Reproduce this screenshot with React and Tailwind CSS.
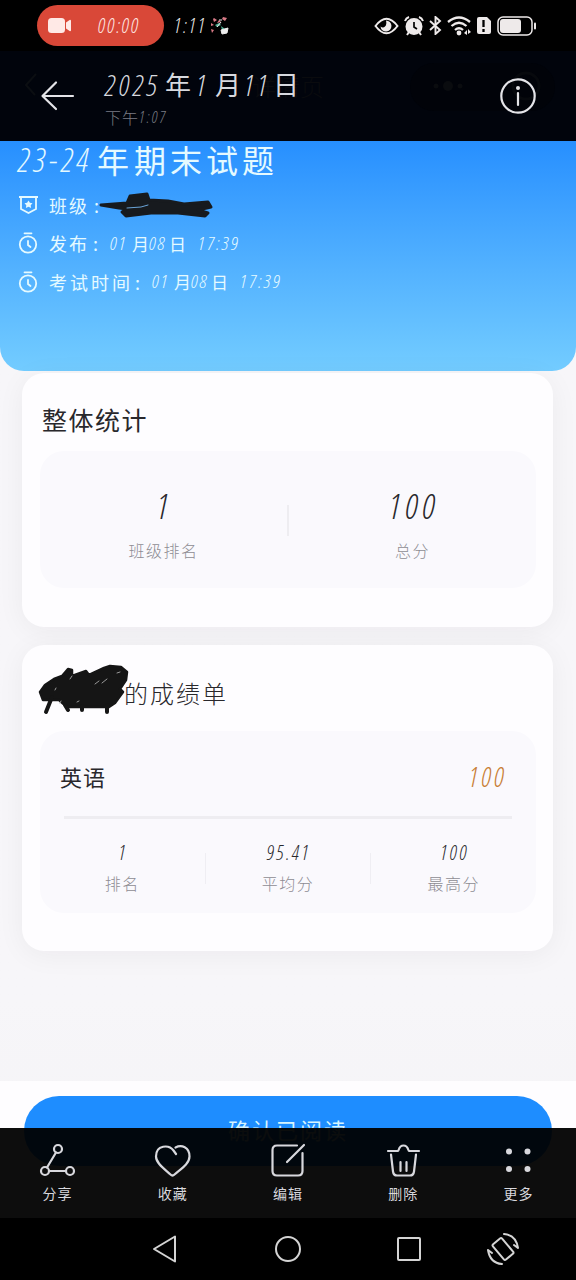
import React from "react";

const digitFont = "font-['Open_Sans','Noto_Sans_CJK_SC',sans-serif] font-light italic [font-stretch:75%]";

function Num({ className = "", tracking = "tracking-[0.1em]", children }) {
  return <span className={`${digitFont} ${tracking} ${className}`}>{children}</span>;
}

function StatusBar() {
  return (
    <div className="flex h-[51px] shrink-0 items-center bg-black pl-[37px] text-[#eeeaea]">
      <div className="flex h-[41px] w-[127px] items-center rounded-full bg-[#d94838] pl-[11px]">
        <svg width="24" height="17" viewBox="0 0 24 17" fill="#ffe9e6">
          <rect x="0" y="1" width="17" height="15" rx="3.5" />
          <path d="M18 5.5 22 2.8q1 0 1 1v9.4q0 1-1 1L18 11.5z" />
        </svg>
        <Num className="ml-[26px] text-[20px] leading-none text-[#ffe9e6]">00:00</Num>
      </div>
      <Num className="ml-[10px] w-[36px] whitespace-nowrap text-[20px] leading-none">1:11</Num>
      <svg width="20" height="19" viewBox="0 0 20 19" className="shrink-0">
        <path d="m4 2 3 2-3 2-1-3zM13 1l4 1-2 3-3-2zM1 7l3 2-3 1zM1 13l3 1-2 3zM7 7l2-3 2 2" fill="#d87985" />
        <path d="m5 9 4-2 2 2-4 2zM11 10l4 3-3 1z" fill="#4bad91" />
        <path d="m7 11 4-5M9 4h3M11 14l7-2-1 5-5 1z" stroke="#eee" fill="#eee" strokeWidth="1" />
      </svg>
      <div className="ml-auto mr-[39px] flex items-center">
        <svg width="25" height="20" viewBox="0 0 25 20" fill="none" stroke="currentColor" strokeWidth="2">
          <path d="M1.500 10Q12.500-4.500 23.500 10 12.500 24.500 1.500 10Z" />
          <path d="M12 4.500a5.500 5.500 0 1 1-5.500 6q2.500 2 4.500 0t1-6Z" fill="currentColor" stroke="none" />
        </svg>
        <svg className="ml-[5px]" width="20" height="20" viewBox="0 0 20 20" fill="none" stroke="currentColor" strokeWidth="2">
          <circle cx="10" cy="10.500" r="7.500" fill="currentColor" />
          <path d="M1 5q1-3 4-4M15 1q3 1 4 4M5 16l-2 3M15 16l2 3" />
          <path d="M10 6v5l3 2" stroke="#000" strokeWidth="1.700" />
        </svg>
        <svg className="ml-[5px]" width="13" height="19" viewBox="0 0 13 19" fill="none" stroke="currentColor" strokeWidth="1.900">
          <path d="m1 5 10 9-4.500 4V1L11 5 1 14" />
        </svg>
        <svg className="ml-[5px]" width="25" height="20" viewBox="0 0 25 20" fill="none" stroke="currentColor" strokeWidth="2.300">
          <path d="M1 6q11-9 22 0M4.500 10q7.500-6.500 15 0M8 14q4-3.500 8 0" />
          <circle cx="12" cy="17" r="2.400" fill="currentColor" stroke="none" />
          <path d="m17 17 3-3v5zM24 16l-3-3v5z" fill="currentColor" stroke="none" />
        </svg>
        <svg className="ml-[4px]" width="15" height="19" viewBox="0 0 15 19">
          <path d="M3 1h8l4 4v11q0 2-2 2H3q-2 0-2-2V3q0-2 2-2Z" fill="currentColor" />
          <path d="M7.500 4v7M7.500 13v3" stroke="#000" strokeWidth="2.300" />
        </svg>
        <svg className="ml-[6px]" width="40" height="20" viewBox="0 0 40 20">
          <rect x="1" y="1" width="34" height="18" rx="5" fill="none" stroke="currentColor" strokeWidth="1.500" />
          <rect x="3" y="3" width="21" height="14" rx="3" fill="currentColor" />
          <path d="M38 7.500v5" stroke="currentColor" strokeWidth="2" strokeLinecap="round" />
        </svg>
      </div>
    </div>
  );
}

function PhotoHeader() {
  return (
    <div className="relative flex h-[90px] shrink-0 bg-[#01040c] text-[#d7d9df]">
      <svg className="absolute left-[24px] top-[22px]" width="14" height="24" viewBox="0 0 14 24" fill="none" stroke="#0b0e12" strokeWidth="2"><path d="M12 1 2 12l9 10" /></svg>
      <div className="absolute left-[252px] top-[17px] text-[24px] text-[#0a0b0e]">详情页</div>
      <svg className="absolute left-[410px] top-[12px]" width="145" height="48" viewBox="0 0 145 48" fill="#0a0c0f">
        <rect width="145" height="48" rx="24" fill="#010309" />
        <circle cx="26" cy="23" r="2.500" /><circle cx="38" cy="23" r="5" /><circle cx="50" cy="23" r="2.500" />
        <circle cx="116" cy="23" r="13" fill="none" stroke="#07090d" strokeWidth="3" />
      </svg>
      <svg className="relative ml-[40px] mt-[29px] shrink-0" width="35" height="32" viewBox="0 0 35 32" fill="none" stroke="#e4e4e8" strokeWidth="2.200" strokeLinecap="round" strokeLinejoin="round">
        <path d="M16 2.500 2.500 16 16 29M2.500 16H33" />
      </svg>
      <div className="relative ml-[30px] mt-[13px] flex flex-col whitespace-nowrap">
        <div className="flex h-[40px] items-center text-[26px] leading-none">
          <Num className="w-[60px] text-[29px]" tracking="tracking-[0.12em]">2025</Num>
          <span className="w-[31px] font-normal">年</span>
          <Num className="w-[19px] text-[29px]">1</Num>
          <span className="w-[29px] font-normal">月</span>
          <Num className="w-[29px] text-[29px]">11</Num>
          <span className="font-normal">日</span>
        </div>
        <div className="flex h-[26px] items-center text-[16px] leading-none text-[#7b7d84]">
          <span className="w-[34px] tracking-[1px]">下午</span>
          <Num className="text-[16px]" tracking="tracking-[0.13em]">1:07</Num>
        </div>
      </div>
      <svg className="relative ml-auto mr-[39px] mt-[26px]" width="38" height="38" viewBox="0 0 38 38" fill="none" stroke="#e4e4e8" strokeWidth="2.200">
        <circle cx="19" cy="19" r="16.700" />
        <path d="M19 16v12" strokeLinecap="round" /><circle cx="19" cy="11" r="2" fill="#e4e4e8" stroke="none" />
      </svg>
    </div>
  );
}

function ClockIcon() {
  return (
    <svg width="20" height="22" viewBox="0 0 20 22" fill="none" stroke="currentColor" strokeWidth="1.800" strokeLinecap="round">
      <circle cx="10" cy="12.500" r="8.200" /><path d="M6.500 1.300h7M10 9v4l2.500 2" />
    </svg>
  );
}

function Stamp() {
  return (
    <>
      <Num className="w-[22px] text-[19px]">01</Num>
      <span className="w-[17px] text-[17px]">月</span>
      <Num className="w-[20px] text-[19px]">08</Num>
      <span className="w-[29px] text-[17px]">日</span>
      <Num className="text-[19px]" tracking="tracking-[0.12em]">17:39</Num>
    </>
  );
}

function ExamBanner() {
  return (
    <div className="flex h-[230px] shrink-0 flex-col rounded-b-[24px] bg-linear-to-b from-[#268fff] to-[#73ccff] pl-[18px] font-normal text-[#e5faff]">
      <div className="flex h-[38px] shrink-0 items-center whitespace-nowrap pb-[2px] text-[32px] leading-none">
        <Num className="w-[79px] text-[33px]" tracking="tracking-[0.11em]">23-24</Num>
        <span className="w-[37px]">年</span>
        <span className="tracking-[4px]">期末试题</span>
      </div>
      <div className="mt-[7px] flex h-[38px] items-center text-[18px] leading-none">
        <svg width="21" height="20" viewBox="0 0 21 20" fill="none" stroke="currentColor" strokeWidth="1.800">
          <path d="M1 2h19M3 2v12l7.500 4 7.500-4V2" /><path d="m10.500 5.500 1.400 2.200 2.600.5-1.800 2 .4 2.700-2.600-1.200-2.600 1.200.4-2.700-1.800-2 2.600-.5z" fill="currentColor" stroke="none" />
        </svg>
        <span className="ml-[10px] w-[45px] tracking-[2px]">班级</span>
        <span>:</span>
        <svg className="-ml-[1px] shrink-0" width="118" height="28" viewBox="0 0 118 28" fill="#171a1e" stroke="#171a1e" strokeLinecap="round" strokeLinejoin="round">
          <path d="M3 14 29 12 32 5 49 3 51 9 70 10 86 13 110 11 113 16 100 19 110 22 107 25 80 22 53 22 28 25 24 21 29 18 21 17Z" strokeWidth="3" />
          <path d="m29 17 14-1 7-2" fill="none" stroke="#6aa4d8" strokeWidth="1" />
        </svg>
      </div>
      <div className="flex h-[38px] items-center whitespace-nowrap text-[18px] leading-none">
        <ClockIcon /><span className="ml-[11px] w-[44px] tracking-[2px]">发布</span><span className="w-[17px]">:</span><Stamp />
      </div>
      <div className="flex h-[39px] items-center whitespace-nowrap text-[18px] leading-none">
        <ClockIcon /><span className="ml-[11px] w-[86px] tracking-[3px]">考试时间</span><span className="w-[17px]">:</span><Stamp />
      </div>
    </div>
  );
}

function Stat({ value, label, large }) {
  return (
    <div className="flex flex-1 flex-col items-center leading-none">
      <Num className={large ? "pl-[3px] text-[35px] leading-[38px]" : "pl-[2px] text-[20px] leading-[24px]"} tracking="tracking-[0.12em]">{value}</Num>
      <span className={large ? "mt-[17px] text-[16px] tracking-[1.500px] text-[#8e8c93]" : "mt-[10px] text-[16px] tracking-[1.500px] text-[#8e8c93]"}>{label}</span>
    </div>
  );
}

function ScoreCards() {
  const card = "shrink-0 rounded-[22px] bg-[#fefdff] pl-[18px] pr-[17px] shadow-[0_4px_28px_rgba(30,20,40,0.05)]";
  return (
    <div className="flex flex-col gap-[18px] pl-[22px] pr-[23px] pt-[2px] text-[#29282c]">
      <section className={`${card} h-[254px]`}>
        <h2 className="flex h-[78px] items-end pb-[19px] pl-[2px] text-[25px] font-normal leading-none tracking-[1.500px]">整体统计</h2>
        <div className="flex h-[137px] rounded-[24px] bg-[#faf9fd] pt-[36px]">
          <Stat value="1" label="班级排名" large />
          <div className="mt-[18px] h-[31px] w-[2px] bg-[#eeedf1]" />
          <Stat value="100" label="总分" large />
        </div>
      </section>
      <section className={`${card} h-[306px]`}>
        <h2 className="flex h-[86px] items-center pt-[10px] text-[24px] leading-none tracking-[2px]">
          <svg className="-ml-[3px] -mt-[8px] shrink-0" width="92" height="52" viewBox="0 0 92 52" fill="none" stroke="#151515" strokeLinecap="round" strokeLinejoin="round">
            <path d="M3 29 8 22 17 16 25 13 31 6 35 7 35 13 49 8 52 12 67 5 73 3 84 4 90 9 89 17 83 26 86 29 78 40 72 44 30 44 22 37 6 37Z" fill="#151515" strokeWidth="2.500" />
            <path d="M15 34 9 49M28 42l3 5M45 43v4M70 42v7" strokeWidth="4" />
            <path d="m58 21 4-3M65 20l5-4M33 16l2-3M80 10l3-1M18 27l1-2M23 40l1-2M40 39l2-1" stroke="#999" strokeWidth="1" />
          </svg>
          <span className="-ml-[5px]">的成绩单</span>
        </h2>
        <div className="flex h-[182px] flex-col rounded-[24px] bg-[#faf9fd]">
          <div className="mx-[20px] flex h-[85px] shrink-0 items-center justify-between pt-[4px] text-[22px] leading-none">
            <span className="font-normal tracking-[1px]">英语</span>
            <Num className="mr-[9px] mt-[1px] text-[27px] text-[#c87d32]" tracking="tracking-[0.11em]">100</Num>
          </div>
          <div className="ml-[24px] mr-[24px] h-[3px] shrink-0 bg-[#eeedf1]" />
          <div className="flex pt-[22px]">
            <Stat value="1" label="排名" />
            <div className="mt-[12px] h-[31px] w-px bg-[#efeef3]" />
            <Stat value="95.41" label="平均分" />
            <div className="mt-[12px] h-[31px] w-px bg-[#efeef3]" />
            <Stat value="100" label="最高分" />
          </div>
        </div>
      </section>
    </div>
  );
}

const icons = {
  share: <><circle cx="19" cy="6" r="4" /><circle cx="6" cy="28" r="4" /><circle cx="31" cy="28" r="4" /><path d="M17 9.500 8 24.500M10 28h17" /></>,
  heart: <path d="M22 11 19.500 7.500C15 1.500 2 1.500 2 13.500c0 7 9 13 14.500 18q2 2 4 0C26 26.500 35.500 21 35.500 13.500 35.500 4 27.500 1.500 21.500 4.500" />,
  edit: <path d="M27 2.500H7q-4.500 0-4.500 4.500v21q0 4.500 4.500 4.500h21q4.500 0 4.500-4.500V10M17 19 34 2" />,
  trash: <path d="M3 8h10c1 0 .5-5.500 5.500-5.500s4.500 5.500 5.500 5.500h10M6 11.500l2 17q.5 4 4 4h13q3.500 0 4-4l2-17M15.500 19v9M21.500 19v9" />,
  more: <g fill="currentColor" stroke="none"><circle cx="9" cy="8.500" r="3" /><circle cx="27.500" cy="8.500" r="3" /><circle cx="9" cy="26" r="3" /><circle cx="27.500" cy="26" r="3" /></g>,
};

function Toolbar() {
  const items = [["share", "分享"], ["heart", "收藏"], ["edit", "编辑"], ["trash", "删除"], ["more", "更多"]];
  return (
    <div className="absolute inset-x-0 bottom-0 flex h-[90px] bg-black/95 text-[#d8d8dd]">
      {items.map(([icon, label]) => (
        <div key={icon} className="flex flex-1 flex-col items-center pt-[15px]">
          <svg width="37" height="35" viewBox="0 0 37 35" fill="none" stroke="currentColor" strokeWidth="2.200" strokeLinecap="round">{icons[icon]}</svg>
          <span className="mt-[8px] text-[14px] font-normal leading-none tracking-[1px]">{label}</span>
        </div>
      ))}
    </div>
  );
}

function NavigationBar() {
  return (
    <div className="flex h-[62px] shrink-0 items-center bg-black pl-[151px] text-[#d4d4d4]">
      <svg width="28" height="30" viewBox="0 0 28 30" fill="none" stroke="currentColor" strokeWidth="2" strokeLinejoin="round"><path d="M24 2.500v25L3 15Z" /></svg>
      <svg className="ml-[94px]" width="30" height="30" viewBox="0 0 30 30" fill="none" stroke="currentColor" strokeWidth="2"><circle cx="15" cy="15" r="12" /></svg>
      <svg className="ml-[93px]" width="26" height="26" viewBox="0 0 26 26" fill="none" stroke="currentColor" strokeWidth="2"><rect x="2" y="2" width="22" height="22" rx="1" /></svg>
      <svg className="ml-[63px]" width="36" height="36" viewBox="0 0 36 36" fill="none" stroke="currentColor" strokeWidth="2" strokeLinecap="round" strokeLinejoin="round">
        <rect x="12" y="8" width="12" height="20" rx="1.500" transform="rotate(-40 18 18)" />
        <path d="M19 3Q31 4 33 17l-4-3M17 33Q5 32 3 19l4 3" />
      </svg>
    </div>
  );
}

export default function App() {
  return (
    <div className="flex h-[1280px] w-[576px] flex-col overflow-hidden bg-black font-['Noto_Sans_CJK_SC',sans-serif] font-light">
      <StatusBar />
      <PhotoHeader />
      <main className="relative flex min-h-0 flex-1 flex-col overflow-hidden bg-linear-to-b from-[#f7f6f9] from-80% to-[#f4f3f5]">
        <ExamBanner />
        <ScoreCards />
        <div className="mt-auto flex h-[137px] shrink-0 items-start bg-[#fefdff] pl-[24px] pr-[24px] pt-[15px]">
          <button className="flex h-[70px] w-full items-center justify-center rounded-full bg-[#1e8dff] pb-[4px] text-[22px] font-normal leading-none tracking-[2px] text-[#d5f4ff]">确认已阅读</button>
        </div>
        <Toolbar />
      </main>
      <NavigationBar />
    </div>
  );
}
